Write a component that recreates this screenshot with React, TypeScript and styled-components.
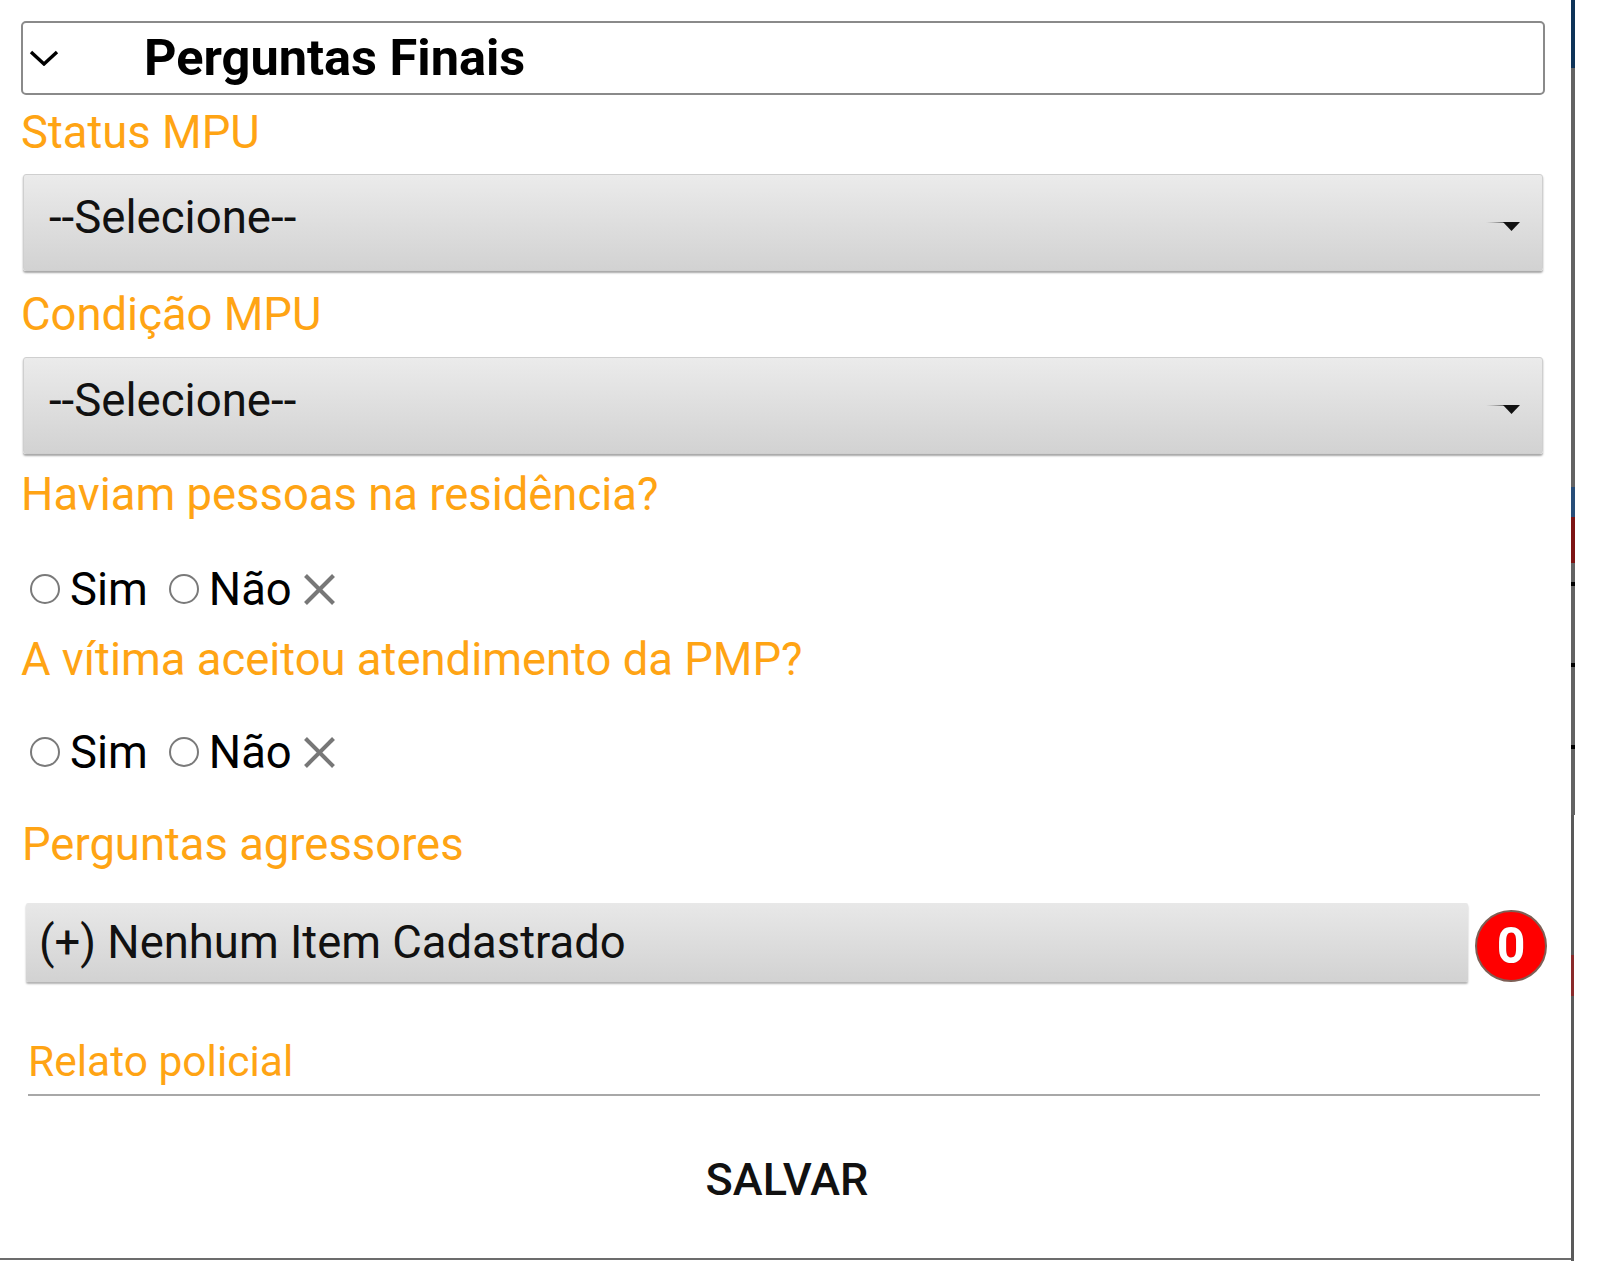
import React from "react";
import styled, { createGlobalStyle } from "styled-components";

const GlobalStyle = createGlobalStyle`
  html, body { margin: 0; padding: 0; background: #ffffff; }
  body { font-family: Roboto, "Noto Sans", "Liberation Sans", sans-serif; }
  * { box-sizing: border-box; }
`;

const Page = styled.div`
  display: flex;
  align-items: flex-start;
  width: 1610px;
`;

const Modal = styled.div`
  width: 1571px;
  padding: 21px 26px 51px 21px;
  border-bottom: 2px solid #6c6c6c;
  display: flex;
  flex-direction: column;
  background: #fff;
`;

const EdgeStrip = styled.div`
  display: flex;
  flex-direction: column;
  width: 4px;
`;

const EdgeSegment = styled.div<{ $h: number; $w: number; $c: string }>`
  height: ${(p) => p.$h}px;
  width: ${(p) => p.$w}px;
  background: ${(p) => p.$c};
`;

const Header = styled.div`
  height: 74px;
  border: 2px solid #8a8a8a;
  border-radius: 5px;
  display: flex;
  align-items: center;
  padding-left: 6px;
`;

const Title = styled.h2`
  margin: 0 0 0 85px;
  font-size: 50.5px;
  font-weight: 700;
  color: #000;
  line-height: 60px;
`;

const Label = styled.div<{ $mt: number; $ml?: number; $size?: number; $lh?: number }>`
  margin-top: ${(p) => p.$mt}px;
  margin-left: ${(p) => p.$ml ?? 0}px;
  color: #ffa414;
  font-size: ${(p) => p.$size ?? 45.4}px;
  line-height: ${(p) => p.$lh ?? 54}px;
  white-space: nowrap;
`;

const Select = styled.div<{ $mt: number }>`
  margin: ${(p) => p.$mt}px 2px 0 2px;
  height: 97px;
  border: 1px solid #cfcfcf;
  border-radius: 3px;
  background: linear-gradient(#ebebeb, #d2d2d2);
  box-shadow: 0 2px 2px rgba(0, 0, 0, 0.35);
  display: flex;
  align-items: center;
  justify-content: space-between;
  padding: 0 22px 0 25px;
`;

const SelectText = styled.span`
  font-size: 45.6px;
  color: #111;
  line-height: 54px;
  margin-top: -9px;
`;

const ArrowIcon = styled.svg`
  margin-top: 8px;
`;

const RadioRow = styled.div<{ $mt: number }>`
  margin-top: ${(p) => p.$mt}px;
  height: 54px;
  display: flex;
  align-items: center;
  padding-left: 9px;
`;

const RadioCircle = styled.span<{ $ml: number }>`
  width: 30px;
  height: 30px;
  border: 2px solid #7a7a7a;
  border-radius: 50%;
  margin-left: ${(p) => p.$ml}px;
  flex: none;
`;

const RadioText = styled.span<{ $ml: number }>`
  margin-left: ${(p) => p.$ml}px;
  font-size: 45.4px;
  line-height: 54px;
  color: #000;
  margin-top: 2px;
`;

const ClearIcon = styled.svg`
  margin-left: 11px;
  margin-top: 1px;
`;

const ItemRow = styled.div`
  margin-top: 31px;
  margin-left: 5px;
  margin-right: -2px;
  display: flex;
  align-items: flex-end;
  gap: 7px;
`;

const ItemButton = styled.div`
  flex: 1;
  height: 79px;
  border-radius: 2px;
  background: linear-gradient(#e8e8e8, #d2d2d2);
  box-shadow: 0 2px 2px rgba(0, 0, 0, 0.3);
  display: flex;
  align-items: center;
  padding-left: 13px;
  font-size: 45.4px;
  color: #111;
`;

const Badge = styled.div`
  width: 72px;
  height: 72px;
  border-radius: 50%;
  background: #ff0000;
  border: 2px solid #7d5f55;
  color: #fff;
  font-size: 50px;
  font-weight: 700;
  display: flex;
  align-items: center;
  justify-content: center;
  line-height: 1;
  text-shadow: 0 0 1px rgba(0, 0, 0, 0.4);
`;

const Underline = styled.div`
  margin: 7px 5px 0 7px;
  height: 2px;
  background: #a8a8a8;
`;

const SaveButton = styled.button`
  margin-top: 57px;
  align-self: center;
  background: none;
  border: none;
  padding: 0;
  font-family: Roboto, "Noto Sans", sans-serif;
  font-size: 45px;
  font-weight: 500;
  line-height: 54px;
  color: #111;
  margin-left: 8px;
`;

const Chevron = () => (
  <svg width="30" height="16" viewBox="0 0 30 16">
    <polyline points="2,2 15,14 28,2" fill="none" stroke="#000" strokeWidth="3.4" />
  </svg>
);

const DropArrow = () => (
  <ArrowIcon width="34" height="10" viewBox="0 0 34 10">
    <defs>
      <linearGradient id="fadeLine" x1="0" x2="1" y1="0" y2="0">
        <stop offset="0" stopColor="#888" stopOpacity="0" />
        <stop offset="1" stopColor="#555" stopOpacity="0.9" />
      </linearGradient>
    </defs>
    <rect x="0" y="0" width="18" height="1" fill="url(#fadeLine)" />
    <polygon points="17,0 34,0 25.5,9" fill="#111" />
  </ArrowIcon>
);

const XIcon = () => (
  <ClearIcon width="33" height="33" viewBox="0 0 33 33">
    <line x1="2.5" y1="2.5" x2="30.5" y2="30.5" stroke="#777" strokeWidth="4" />
    <line x1="30.5" y1="2.5" x2="2.5" y2="30.5" stroke="#777" strokeWidth="4" />
  </ClearIcon>
);

const YesNo = ({ mt }: { mt: number }) => (
  <RadioRow $mt={mt}>
    <RadioCircle $ml={0} />
    <RadioText $ml={10}>Sim</RadioText>
    <RadioCircle $ml={21} />
    <RadioText $ml={10}>Não</RadioText>
    <XIcon />
  </RadioRow>
);

const edgeSegments: { h: number; w: number; c: string }[] = [
  { h: 68, w: 4, c: "#0e3358" },
  { h: 419, w: 4, c: "#636363" },
  { h: 30, w: 4, c: "#274d78" },
  { h: 46, w: 4, c: "#7d1414" },
  { h: 19, w: 4, c: "#636363" },
  { h: 4, w: 4, c: "#000" },
  { h: 77, w: 4, c: "#636363" },
  { h: 4, w: 4, c: "#000" },
  { h: 78, w: 4, c: "#636363" },
  { h: 4, w: 4, c: "#000" },
  { h: 66, w: 4, c: "#636363" },
  { h: 140, w: 3, c: "#5a5a5a" },
  { h: 41, w: 3, c: "#8a2a2a" },
  { h: 265, w: 3, c: "#5a5a5a" },
];

export default function App() {
  return (
    <>
      <GlobalStyle />
      <Page>
        <Modal>
          <Header>
            <Chevron />
            <Title>Perguntas Finais</Title>
          </Header>
          <Label $mt={11}>Status MPU</Label>
          <Select $mt={14}>
            <SelectText>--Selecione--</SelectText>
            <DropArrow />
          </Select>
          <Label $mt={17}>Condição MPU</Label>
          <Select $mt={15}>
            <SelectText>--Selecione--</SelectText>
            <DropArrow />
          </Select>
          <Label $mt={14}>Haviam pessoas na residência?</Label>
          <YesNo mt={40} />
          <Label $mt={17}>A vítima aceitou atendimento da PMP?</Label>
          <YesNo mt={38} />
          <Label $mt={39} $ml={1}>Perguntas agressores</Label>
          <ItemRow>
            <ItemButton>(+) Nenhum Item Cadastrado</ItemButton>
            <Badge>0</Badge>
          </ItemRow>
          <Label $mt={55} $ml={7} $size={42.5} $lh={50}>Relato policial</Label>
          <Underline />
          <SaveButton>SALVAR</SaveButton>
        </Modal>
        <EdgeStrip>
          {edgeSegments.map((s, i) => (
            <EdgeSegment key={i} $h={s.h} $w={s.w} $c={s.c} />
          ))}
        </EdgeStrip>
      </Page>
    </>
  );
}
